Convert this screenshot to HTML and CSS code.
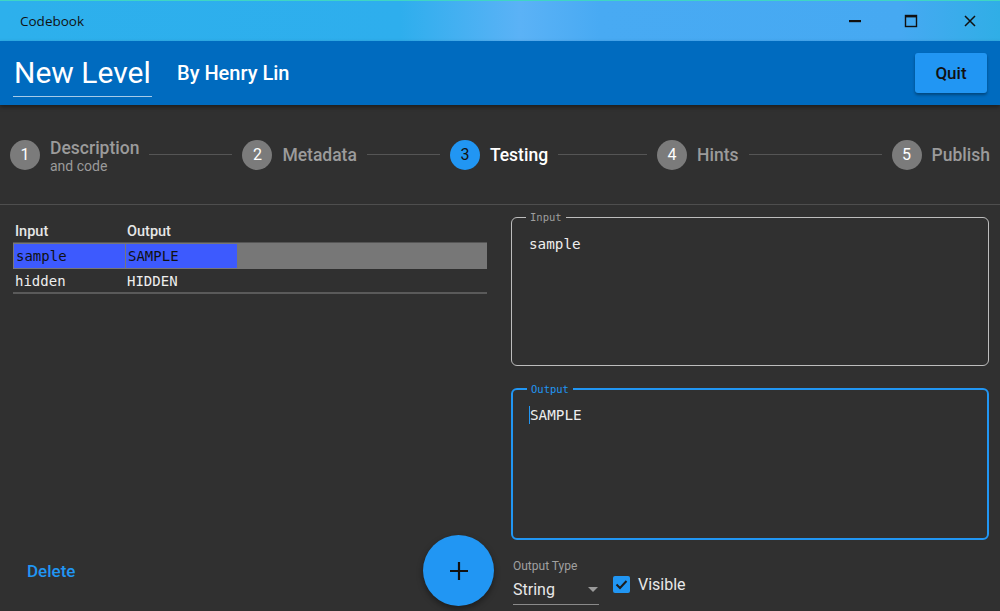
FILE: index.html
```html
<!DOCTYPE html>
<html>
<head>
<meta charset="utf-8">
<link rel="stylesheet" href="styles.css">
</head>
<body>
<div class="app">
  <div class="titlebar">
    <span class="title">Codebook</span>
    <div class="winctl">
      <svg class="wbtn" width="16" height="16" viewBox="0 0 16 16"><rect x="2" y="7" width="12" height="2.2" fill="#111"/></svg>
      <svg class="wbtn" width="16" height="16" viewBox="0 0 16 16"><rect x="2.5" y="2.5" width="11" height="11" fill="none" stroke="#111" stroke-width="1.4"/><rect x="2" y="2" width="12" height="2.4" fill="#111"/></svg>
      <svg class="wbtn" width="16" height="16" viewBox="0 0 16 16"><path d="M3 3 L13 13 M13 3 L3 13" stroke="#111" stroke-width="1.5"/></svg>
    </div>
  </div>
  <div class="header">
    <div class="level-name">New Level</div>
    <div class="author">By Henry Lin</div>
    <div class="spacer"></div>
    <button class="quit">Quit</button>
  </div>
  <div class="stepper">
    <div class="step">
      <span class="circle">1</span>
      <span class="slabel two"><span class="stitle">Description</span><span class="ssub">and code</span></span>
    </div>
    <div class="conn c1"></div>
    <div class="step">
      <span class="circle">2</span>
      <span class="slabel">Metadata</span>
    </div>
    <div class="conn c2"></div>
    <div class="step active">
      <span class="circle">3</span>
      <span class="slabel">Testing</span>
    </div>
    <div class="conn c3"></div>
    <div class="step">
      <span class="circle">4</span>
      <span class="slabel">Hints</span>
    </div>
    <div class="conn c4"></div>
    <div class="step">
      <span class="circle">5</span>
      <span class="slabel">Publish</span>
    </div>
  </div>
  <div class="content">
    <div class="left">
      <div class="table">
        <div class="thead">
          <div class="cell">Input</div>
          <div class="cell">Output</div>
        </div>
        <div class="row selected">
          <div class="cell">sample</div>
          <div class="cell">SAMPLE</div>
        </div>
        <div class="row">
          <div class="cell">hidden</div>
          <div class="cell">HIDDEN</div>
        </div>
      </div>
      <div class="grow"></div>
      <div class="footer">
        <button class="delete">Delete</button>
        <button class="fab"><svg width="22" height="22" viewBox="0 0 22 22"><path d="M11 2 V20 M2 11 H20" stroke="#111" stroke-width="2.2"/></svg></button>
      </div>
    </div>
    <div class="right">
      <div class="field">
        <span class="legend">Input</span>
        <div class="ftext">sample</div>
      </div>
      <div class="field focused">
        <span class="legend">Output</span>
        <div class="ftext"><span class="caret"></span>SAMPLE</div>
      </div>
      <div class="controls">
        <div class="select">
          <span class="slabel-sm">Output Type</span>
          <div class="svalue"><span>String</span><span class="arrow"></span></div>
        </div>
        <label class="check">
          <span class="box"><svg width="17" height="17" viewBox="0 0 17 17"><path d="M3.5 8.5 L7 12 L13.5 5" fill="none" stroke="#1c1c1c" stroke-width="2"/></svg></span>
          <span>Visible</span>
        </label>
      </div>
    </div>
  </div>
</div>
</body>
</html>
```

FILE: styles.css
```css
* { box-sizing: border-box; }
html, body { margin: 0; padding: 0; }
body {
  width: 1000px;
  height: 611px;
  overflow: hidden;
  background: #303030;
  font-family: Roboto, "Noto Sans", sans-serif;
}
.app { display: flex; flex-direction: column; height: 611px; }

.titlebar {
  height: 41px;
  flex: none;
  display: flex;
  align-items: center;
  padding-left: 20px;
  border-top: 1px solid #3fd6c4;
  background: linear-gradient(90deg, #2db0ec 0%, #2eaeed 40%, #5bb2f6 52%, #48aaf3 60%, #46a9f2 90%, #30aee6 100%);
}
.title { font-family: "Open Sans", "Noto Sans", sans-serif; font-size: 13.5px; color: #111; }
.winctl { margin-left: auto; display: flex; height: 100%; }
.wbtn { width: 16px; height: 16px; margin: auto 0; }
.winctl .wbtn:nth-child(1) { margin-right: 40px; }
.winctl .wbtn:nth-child(2) { margin-right: 43px; }
.winctl .wbtn:nth-child(3) { margin-right: 22px; }

.header {
  height: 64px;
  flex: none;
  background: #006bbf;
  display: flex;
  align-items: center;
  padding: 0 13px;
  box-shadow: 0 2px 4px rgba(0,0,0,0.4);
  position: relative;
  z-index: 1;
}
.level-name {
  color: #fff;
  font-size: 30px;
  padding: 4px 0 6px 1px;
  width: 139px;
  border-bottom: 1px solid rgba(255,255,255,0.65);
  margin-top: 2px;
  white-space: nowrap;
}
.author { color: #fff; font-size: 20px; font-weight: 500; margin-left: 25px; }
.spacer { flex: 1; }
.quit {
  width: 72px; height: 40px;
  background: #2196f3;
  border: none; border-radius: 3px;
  color: #111;
  font-family: Roboto, sans-serif;
  font-size: 17px; font-weight: 500;
  box-shadow: 0 2px 3px rgba(0,0,0,0.35);
  margin-top: -1px;
}

.stepper {
  height: 100px;
  flex: none;
  display: flex;
  align-items: center;
  padding: 0 10px;
  border-bottom: 1px solid #4e4e4e;
}
.step { display: flex; align-items: center; flex: none; }
.circle {
  width: 30px; height: 30px; border-radius: 50%;
  background: #7b7b7b;
  color: #fff;
  display: flex; align-items: center; justify-content: center;
  font-size: 16px;
  flex: none;
}
.step.active .circle { background: #2196f3; color: #111; }
.slabel { margin-left: 10px; font-size: 17.5px; font-weight: 500; color: #9b9b9b; white-space: nowrap; }
.step.active .slabel { color: #fff; }
.slabel.two { display: flex; flex-direction: column; margin-top: 2px; }
.stitle { line-height: 20px; }
.ssub { font-size: 14px; font-weight: 400; line-height: 16px; }
.conn { height: 1px; background: #555; margin: 0 10px; }
.c1 { flex: 0 0 83px; }
.c2 { flex: 0 0 73px; }
.c3 { flex: 0 0 89px; }
.c4 { flex: 1 1 auto; }

.content { flex: 1; display: grid; grid-template-columns: 500px 1fr; min-height: 0; }
.left { display: flex; flex-direction: column; padding: 16px 13px 5px 13px; }
.table { width: 474px; }
.thead, .row { display: flex; }
.cell { width: 112px; padding-left: 2px; }
.thead { height: 22px; align-items: center; border-bottom: 1px solid #555; }
.thead .cell { font-weight: 500; font-size: 14.5px; color: #e6e6e6; }
.row { height: 25px; align-items: center; font-family: "DejaVu Sans Mono", monospace; font-size: 14px; color: #eee; }
.row + .row { border-bottom: 2px solid #5a5a5a; }
.row.selected { background: #777; padding: 1px 0; height: 26px; }
.row.selected .cell { background: #3d5afe; color: #111; height: 100%; display: flex; align-items: center; margin-left: 1px; width: 111px; }
.grow { flex: 1; }
.footer { display: flex; align-items: center; justify-content: space-between; }
.delete {
  background: none; border: none; color: #2196f3;
  font-family: Roboto, sans-serif; font-size: 17px; font-weight: 500;
  padding: 0 0 0 14px;
}
.fab {
  width: 71px; height: 71px; border-radius: 50%;
  background: #2196f3; border: none;
  display: flex; align-items: center; justify-content: center;
  margin-right: -7px;
  box-shadow: 0 3px 6px rgba(0,0,0,0.4);
}

.right { display: flex; flex-direction: column; padding: 12px 11px 0 11px; }
.field {
  position: relative;
  height: 149px;
  border: 1.5px solid #bdbdbd;
  border-radius: 6px;
  padding: 16px 0 0 17px;
}
.field.focused { border: 2px solid #2196f3; margin-top: 22px; height: 152px; padding-top: 15px; }
.legend {
  position: absolute;
  top: -8px; left: 14px;
  padding: 0 4px;
  background: #303030;
  font-family: "DejaVu Sans Mono", monospace;
  font-size: 10.5px;
  color: #9e9e9e;
  line-height: 14px;
}
.focused .legend { color: #2196f3; }
.ftext { font-family: "DejaVu Sans Mono", monospace; font-size: 14.3px; color: #eee; line-height: 20px; position: relative; }
.caret { position: absolute; left: -1px; top: 1px; width: 1px; height: 18px; background: #2196f3; }

.controls { display: flex; align-items: center; margin-top: 19px; padding-left: 2px; }
.select { width: 86px; display: flex; flex-direction: column; border-bottom: 1px solid #8a8a8a; }
.slabel-sm { font-size: 12px; color: #a0a0a0; line-height: 14px; }
.svalue { display: flex; align-items: center; justify-content: space-between; font-size: 16px; color: #e8e8e8; height: 31px; padding-top: 2px; }
.arrow { width: 0; height: 0; border-left: 5px solid transparent; border-right: 5px solid transparent; border-top: 5px solid #9a9a9a; margin-right: 1px; }
.check { display: flex; align-items: center; margin-left: 14px; font-size: 16px; color: #e8e8e8; margin-top: 4px; }
.box { width: 17px; height: 17px; border-radius: 2px; background: #2196f3; display: flex; margin-right: 8px; }
```
